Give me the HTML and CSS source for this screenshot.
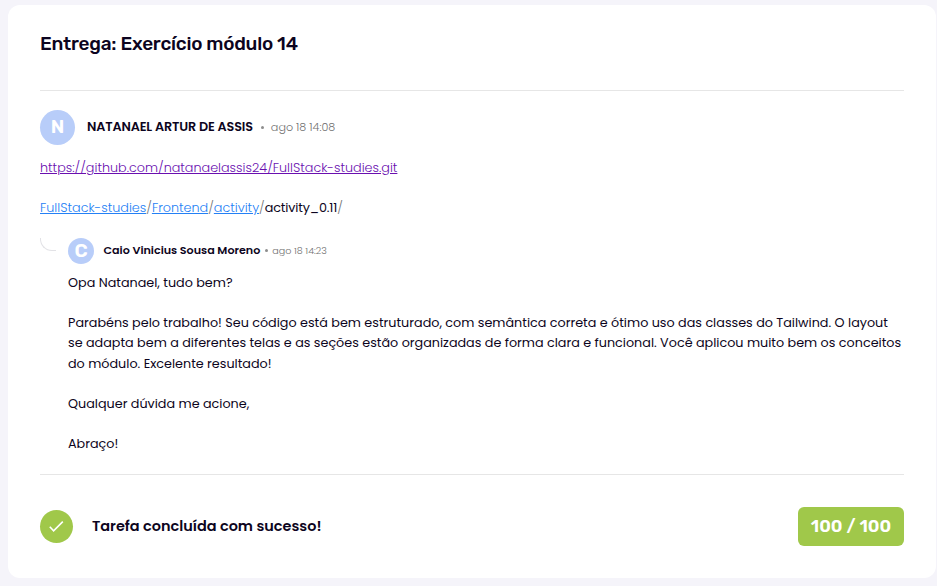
FILE: index.html
```
<!DOCTYPE html>
<html lang="pt-BR">
<head>
<meta charset="utf-8">
<title>Entrega: Exercício módulo 14</title>
<link rel="stylesheet" href="styles.css">
</head>
<body>
<main class="card">
  <h1 class="title">Entrega: Exercício módulo 14</h1>
  <section class="thread">
    <header class="author">
      <span class="avatar">N</span>
      <strong class="name">NATANAEL ARTUR DE ASSIS</strong>
      <span class="dot"></span>
      <time class="time">ago 18 14:08</time>
    </header>
    <p class="submission"><a class="visited" href="#">https://github.com/natanaelassis24/FullStack-studies.git</a></p>
    <p class="submission path"><a href="#">FullStack-studies</a><i>/</i><a href="#">Frontend</a><i>/</i><a href="#">activity</a><i>/</i><span class="file">activity_0.11</span><i>/</i></p>
    <article class="reply">
      <span class="elbow"></span>
      <div class="reply-body">
        <header class="author small">
          <span class="avatar">C</span>
          <strong class="name">Caio Vinicius Sousa Moreno</strong>
          <span class="dot"></span>
          <time class="time">ago 18 14:23</time>
        </header>
        <p>Opa Natanael, tudo bem?</p>
        <p>Parabéns pelo trabalho! Seu código está bem estruturado, com semântica correta e ótimo uso das classes do Tailwind. O layout se adapta bem a diferentes telas e as seções estão organizadas de forma clara e funcional. Você aplicou muito bem os conceitos do módulo. Excelente resultado!</p>
        <p>Qualquer dúvida me acione,</p>
        <p>Abraço!</p>
      </div>
    </article>
  </section>
  <footer class="result">
    <span class="check"><svg width="17" height="13" viewBox="0 0 17 13"><path d="M1.8 6.8 5.6 10.8 14.8 1.6" fill="none" stroke="#fff" stroke-width="1.6"/></svg></span>
    <strong class="status">Tarefa concluída com sucesso!</strong>
    <span class="score">100 / 100</span>
  </footer>
</main>
</body>
</html>
```
FILE: styles.css
```
* { box-sizing: border-box; }
body {
  margin: 0;
  padding: 5px 1px 8px 8px;
  height: 586px;
  background: #f5f4fa;
  color: #0c0420;
  font: 400 12.75px/20.4px Poppins, Inter, sans-serif;
}
.card {
  height: 573px;
  padding: 0 32px;
  border-radius: 12px;
  background: #fff;
}
h1, p { margin: 0; }
.title {
  height: 85px;
  padding-top: 27px;
  font: 500 19px/24px Rubik, Roboto, sans-serif;
  letter-spacing: -0.24px;
}
.thread {
  height: 385px;
  padding-top: 19px;
  border-top: 1px solid #e6e6e6;
  border-bottom: 1px solid #e6e6e6;
}
.author { display: flex; align-items: center; height: 35px; }
.avatar {
  width: 35px;
  height: 35px;
  margin-right: 12px;
  border-radius: 50%;
  background: #b8cdf9;
  color: #fff;
  font: 600 19px/34px Rubik, Roboto, sans-serif;
  text-align: center;
}
.name { font-weight: 600; letter-spacing: -0.13px; }
.dot {
  width: 3px;
  height: 3px;
  margin: 0 7px 0 8px;
  border-radius: 50%;
  background: #8d8d8d;
}
.time { color: #707070; font-size: 11.15px; font-weight: 300; }
.submission { margin-top: 13.4px; font-weight: 300; line-height: 20px; }
.submission a { color: #2480f5; }
.submission .visited { color: #6a0fb0; }
.path { margin-top: 20px; }
.path i { color: #777; font-style: normal; }
.file { font-weight: 400; letter-spacing: -0.15px; }
.reply { display: flex; gap: 12px; margin-top: 19.6px; }
.elbow {
  flex: none;
  width: 16px;
  height: 13px;
  border-left: 1px solid #e2e2e6;
  border-bottom: 1px solid #e2e2e6;
  border-bottom-left-radius: 12px;
}
.small { height: 26px; margin-bottom: -11px; }
.small .avatar { width: 26px; height: 26px; margin-right: 9px; line-height: 26px; }
.small .name { margin: -2px 0 0 0.5px; font-size: 11.15px; letter-spacing: 0; }
.small .dot { margin: 0 4px 0 5px; }
.small .time { font-size: 9.56px; }
.reply-body p { margin-top: 19.7px; }
.result { display: flex; align-items: center; height: 103px; }
.check {
  display: grid;
  place-items: center;
  width: 33px;
  height: 33px;
  margin-right: 19px;
  border-radius: 50%;
  background: #a0c84a;
}
.status { margin-top: -1px; font-size: 14.45px; font-weight: 600; }
.score {
  width: 106px;
  height: 39px;
  margin-left: auto;
  border-radius: 6px;
  background: #a0c84a;
  color: #fff;
  font: 600 17.5px/38px Rubik, Roboto, sans-serif;
  text-align: center;
}
```
